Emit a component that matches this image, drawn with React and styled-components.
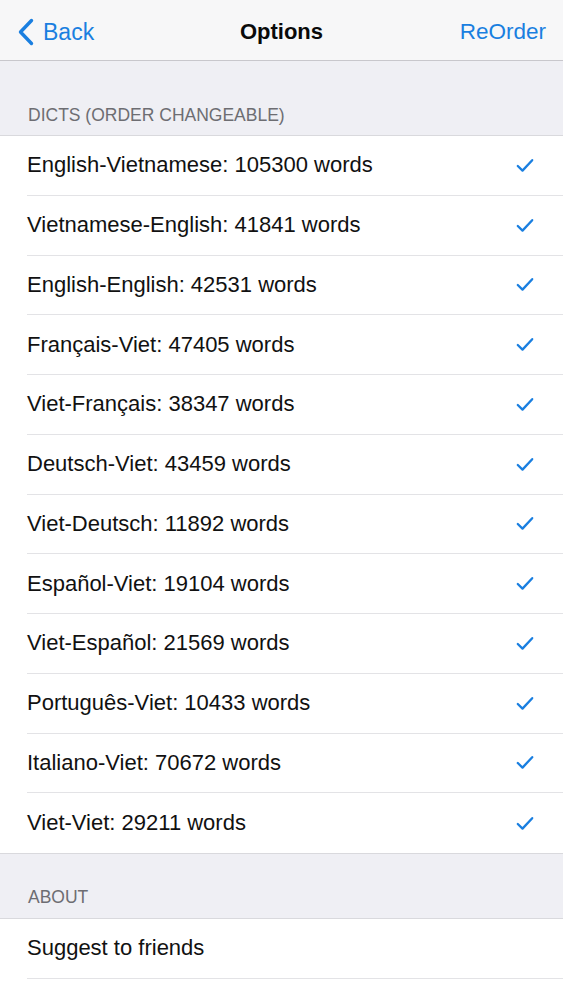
import React from "react";
import styled, { createGlobalStyle } from "styled-components";

const dicts = [
	"English-Vietnamese: 105300 words",
	"Vietnamese-English: 41841 words",
	"English-English: 42531 words",
	"Français-Viet: 47405 words",
	"Viet-Français: 38347 words",
	"Deutsch-Viet: 43459 words",
	"Viet-Deutsch: 11892 words",
	"Español-Viet: 19104 words",
	"Viet-Español: 21569 words",
	"Português-Viet: 10433 words",
	"Italiano-Viet: 70672 words",
	"Viet-Viet: 29211 words",
];

const App = () => {
	return (
		<>
			<GlobalStyle />
			<Screen>
				<NavBar>
					<BackButton>
						<svg width="18" height="28" viewBox="0 0 18 28">
							<path
								d="M14.5 2.5 L3.5 14 L14.5 25.5"
								fill="none"
								stroke="#1a7fe0"
								strokeWidth="3.4"
								strokeLinecap="round"
								strokeLinejoin="round"
							/>
						</svg>
						Back
					</BackButton>
					<Title>Options</Title>
					<NavAction>ReOrder</NavAction>
				</NavBar>

				<SectionHeader>DICTS (ORDER CHANGEABLE)</SectionHeader>
				<List>
					{dicts.map((d) => (
						<Row key={d}>
							<Label>{d}</Label>
							<Check>
								<svg width="18" height="15" viewBox="0 0 18 15">
									<path
										d="M1.8 8 L6.5 12.6 L16.2 2.2"
										fill="none"
										stroke="#1a7fe0"
										strokeWidth="2.3"
										strokeLinecap="round"
										strokeLinejoin="round"
									/>
								</svg>
							</Check>
						</Row>
					))}
				</List>

				<SectionHeader short>ABOUT</SectionHeader>
				<List>
					<Row>
						<Label>Suggest to friends</Label>
					</Row>
					<Row />
				</List>
			</Screen>
		</>
	);
};

const GlobalStyle = createGlobalStyle`
	* {
		box-sizing: border-box;
	}
	html, body {
		margin: 0;
		padding: 0;
		background: #ffffff;
	}
	body {
		font-family: "Liberation Sans", Arial, sans-serif;
		-webkit-font-smoothing: antialiased;
	}
`;

const Screen = styled.div`
	width: 563px;
	min-height: 1000px;
	background: #efeff4;
	display: flex;
	flex-direction: column;
`;

const NavBar = styled.header`
	height: 61px;
	background: #f7f7f8;
	border-bottom: 1px solid #c8c7cc;
	display: flex;
	align-items: center;
	justify-content: space-between;
	padding: 4px 17px 0 17px;
	position: relative;
`;

const BackButton = styled.a`
	display: flex;
	align-items: center;
	gap: 8px;
	color: #1a7fe0;
	font-size: 23px;
	cursor: pointer;
	svg {
		margin-top: -1px;
	}
`;

const Title = styled.h1`
	position: absolute;
	left: 0;
	right: 0;
	text-align: center;
	margin: 0;
	font-size: 22px;
	font-weight: bold;
	color: #0a0a0a;
	pointer-events: none;
`;

const NavAction = styled.a`
	color: #1a7fe0;
	font-size: 22.5px;
	cursor: pointer;
`;

const SectionHeader = styled.div`
	height: ${(p) => (p.short ? "65px" : "75px")};
	display: flex;
	align-items: flex-end;
	padding: 0 28px ${(p) => (p.short ? "10px" : "9px")};
	font-size: 17.5px;
	color: #6d6d72;
	border-bottom: 1px solid #d9d9dd;
`;

const List = styled.ul`
	list-style: none;
	margin: 0;
	padding: 0 0 0 27px;
	background: #ffffff;
	border-bottom: 1px solid #d9d9dd;
	&:last-child {
		border-bottom: none;
		flex: 1;
	}
`;

const Row = styled.li`
	height: 59.75px;
	display: flex;
	align-items: center;
	justify-content: space-between;
	padding-right: 29px;
	border-bottom: 1px solid #e3e3e6;
	&:last-child {
		border-bottom: none;
	}
`;

const Label = styled.span`
	font-size: 22px;
	color: #111111;
`;

const Check = styled.span`
	display: flex;
	align-items: center;
`;

export default App;
